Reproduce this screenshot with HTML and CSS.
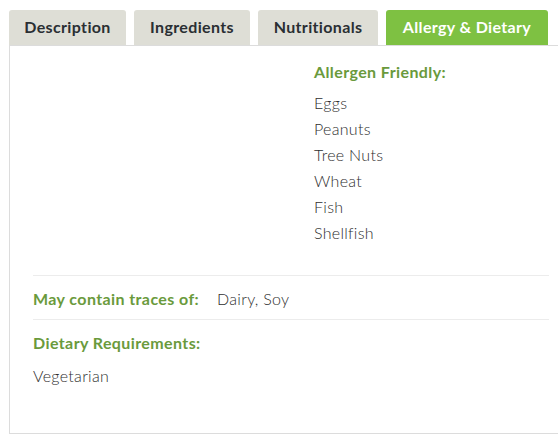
FILE: index.html
```html
<!DOCTYPE html>
<html>
<head>
<meta charset="utf-8">
<link rel="stylesheet" href="styles.css">
</head>
<body>
<div class="wrap">
  <div class="tabs">
    <div class="tab">Description</div>
    <div class="tab">Ingredients</div>
    <div class="tab">Nutritionals</div>
    <div class="tab active">Allergy &amp; Dietary</div>
  </div>
  <div class="panel">
    <div class="top">
      <div class="left"></div>
      <div class="right">
        <h4 class="heading">Allergen Friendly:</h4>
        <ul class="list">
          <li>Eggs</li>
          <li>Peanuts</li>
          <li>Tree Nuts</li>
          <li>Wheat</li>
          <li>Fish</li>
          <li>Shellfish</li>
        </ul>
      </div>
    </div>
    <div class="row traces">
      <span class="heading">May contain traces of:</span>
      <span class="value">Dairy, Soy</span>
    </div>
    <div class="row dietary">
      <div class="heading">Dietary Requirements:</div>
      <div class="value">Vegetarian</div>
    </div>
  </div>
</div>
</body>
</html>
```
FILE: styles.css
```css
html, body {
  margin: 0;
  padding: 0;
  background: #fff;
  overflow: hidden;
}
body {
  font-family: Lato, "Open Sans", sans-serif;
  color: #2e2e2e;
  font-size: 16px;
  letter-spacing: 0.3px;
  line-height: 20px;
}
.wrap {
  padding: 10px 0 0 9px;
}
.tabs {
  display: flex;
  gap: 8px;
  height: 35px;
}
.tab {
  background: #deded6;
  color: #2a2f33;
  font-weight: 700;
  font-size: 16px;
  letter-spacing: 0.35px;
  border-radius: 3px 3px 0 0;
  display: flex;
  align-items: center;
  justify-content: center;
  padding-bottom: 2px;
  box-sizing: border-box;
}
.tab:nth-child(1) { width: 117px; }
.tab:nth-child(2) { width: 116px; }
.tab:nth-child(3) { width: 120px; }
.tab:nth-child(4) { width: 162px; }
.tab.active {
  background: #7ec142;
  color: #fff;
}
.panel {
  border: 1px solid #dcdcdc;
  border-right: none;
  height: 389px;
  padding: 0 9px 0 23px;
  box-sizing: border-box;
}
.top {
  display: grid;
  grid-template-columns: 281px 1fr;
  padding-top: 16px;
  padding-bottom: 29px;
  border-bottom: 1px solid #ececec;
}
.heading {
  margin: 0;
  color: #6a9a3c;
  font-weight: 700;
  font-size: 16px;
  letter-spacing: 0.4px;
  line-height: 20px;
}
.list {
  list-style: none;
  margin: 8px 0 0;
  padding: 0;
  font-weight: 300;
}
.list li {
  height: 26px;
  line-height: 26px;
}
.traces {
  display: flex;
  gap: 18px;
  padding: 13px 0 10px;
  border-bottom: 1px solid #ececec;
}
.value {
  font-weight: 300;
}
.dietary {
  padding-top: 13px;
}
.dietary .value {
  margin-top: 13px;
}
```
